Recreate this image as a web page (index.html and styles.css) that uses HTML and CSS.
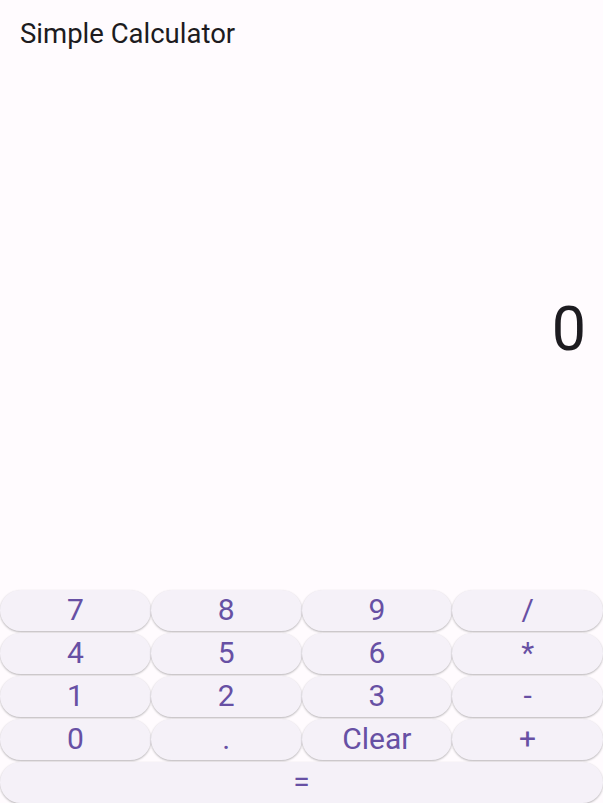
FILE: index.html
```html
<!DOCTYPE html>
<html>
<head>
<meta charset="utf-8">
<link rel="stylesheet" href="styles.css">
</head>
<body>
<div class="app">
  <header class="appbar"><span class="title">Simple Calculator</span></header>
  <main class="display"><span class="value">0</span></main>
  <section class="keypad">
    <button class="key">7</button><button class="key">8</button><button class="key">9</button><button class="key">/</button>
    <button class="key">4</button><button class="key">5</button><button class="key">6</button><button class="key">*</button>
    <button class="key">1</button><button class="key">2</button><button class="key">3</button><button class="key">-</button>
    <button class="key">0</button><button class="key">.</button><button class="key">Clear</button><button class="key">+</button>
    <button class="key key-wide">=</button>
  </section>
</div>
</body>
</html>
```
FILE: styles.css
```css
html, body {
  margin: 0;
  padding: 0;
  background: #FFFBFE;
  font-family: Roboto, "Liberation Sans", sans-serif;
}
.app {
  display: flex;
  flex-direction: column;
  height: 803px;
}
.appbar {
  height: 64px;
  display: flex;
  align-items: center;
  padding-left: 20px;
  flex: none;
}
.title {
  font-size: 27.5px;
  color: #1D1B20;
  line-height: 1;
  position: relative;
  top: 2px;
}
.display {
  flex: 1;
  display: flex;
  align-items: center;
  justify-content: flex-end;
  padding-right: 17px;
}
.value {
  font-size: 61px;
  color: #1D1B20;
  line-height: 1;
  position: relative;
  top: 2px;
}
.keypad {
  display: grid;
  grid-template-columns: repeat(4, 1fr);
  grid-auto-rows: 41px;
  row-gap: 2px;
  flex: none;
}
.key {
  border: none;
  margin: 0;
  padding: 0 0 2px 0;
  border-radius: 999px;
  background: #F5F1F8;
  color: #6750A4;
  font-family: Roboto, "Liberation Sans", sans-serif;
  font-size: 30px;
  line-height: 1;
  box-shadow: 0 1px 2px rgba(0,0,0,0.22), 0 1px 3px rgba(0,0,0,0.08);
}
.key-wide {
  grid-column: 1 / span 4;
}
```
